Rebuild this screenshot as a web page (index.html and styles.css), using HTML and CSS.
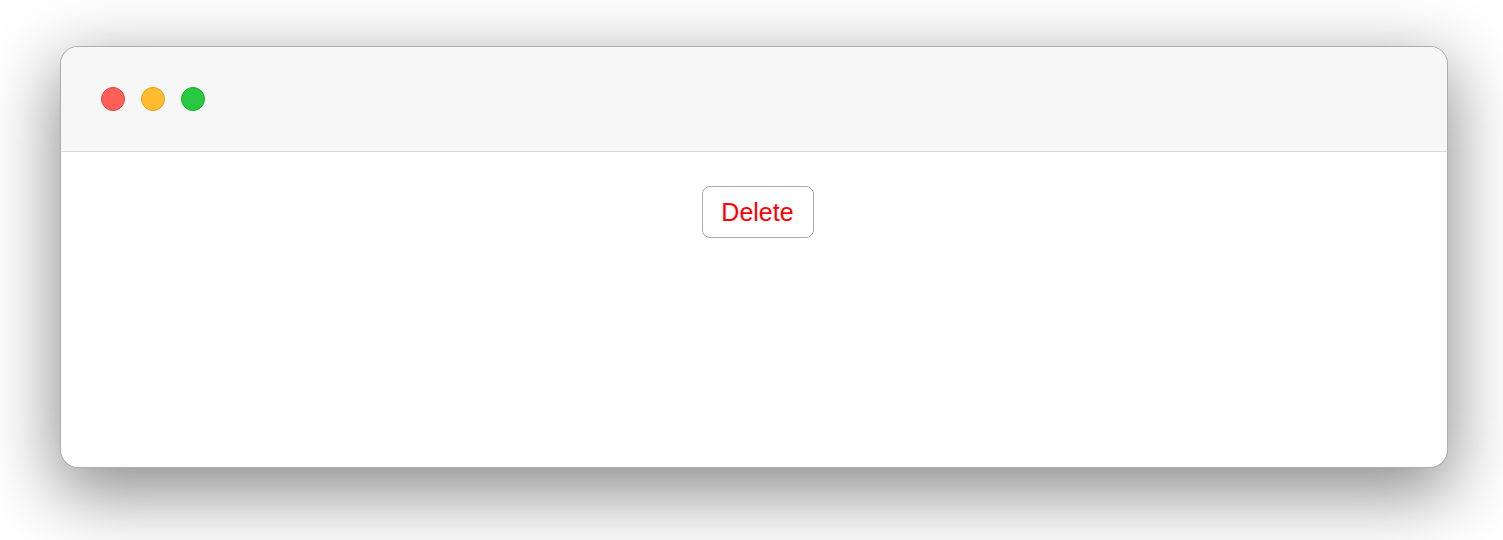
FILE: index.html
```html
<!DOCTYPE html>
<html>
<head>
<meta charset="utf-8">
<link rel="stylesheet" href="styles.css">
</head>
<body>
<div class="stage">
  <div class="window">
    <div class="titlebar">
      <span class="light red"></span>
      <span class="light yellow"></span>
      <span class="light green"></span>
    </div>
    <div class="content">
      <button class="btn">Delete</button>
    </div>
  </div>
</div>
</body>
</html>
```
FILE: styles.css
```css
html, body {
  margin: 0;
  padding: 0;
  background: #ffffff;
}
.stage {
  width: 1503px;
  height: 540px;
  padding: 46px 55px 0 60px;
  box-sizing: border-box;
}
.window {
  width: 1388px;
  height: 422px;
  box-sizing: border-box;
  border: 1px solid rgba(0, 0, 0, 0.32);
  border-radius: 18px;
  background: #ffffff;
  overflow: hidden;
  box-shadow: 0 22px 70px 4px rgba(0, 0, 0, 0.45);
  display: flex;
  flex-direction: column;
}
.titlebar {
  height: 105px;
  box-sizing: border-box;
  background: #f7f7f7;
  border-bottom: 1px solid #d9d9d9;
  display: flex;
  align-items: center;
  gap: 16px;
  padding: 0 0 0 40px;
}
.light {
  width: 24px;
  height: 24px;
  border-radius: 50%;
  box-sizing: border-box;
}
.red { background: #ff5f57; border: 1px solid #e2463f; }
.yellow { background: #febc2e; border: 1px solid #e1a116; }
.green { background: #28c840; border: 1px solid #14ae2a; }
.content {
  flex: 1;
  display: flex;
  justify-content: center;
  align-items: flex-start;
  padding: 34px 0 0 7px;
}
.btn {
  width: 112px;
  height: 52px;
  box-sizing: border-box;
  border: 1.5px solid #acacac;
  border-radius: 8px;
  background: #ffffff;
  color: #ff0000;
  font-family: "Liberation Sans", Arial, sans-serif;
  font-size: 25px;
  padding: 0;
  cursor: pointer;
}
```
